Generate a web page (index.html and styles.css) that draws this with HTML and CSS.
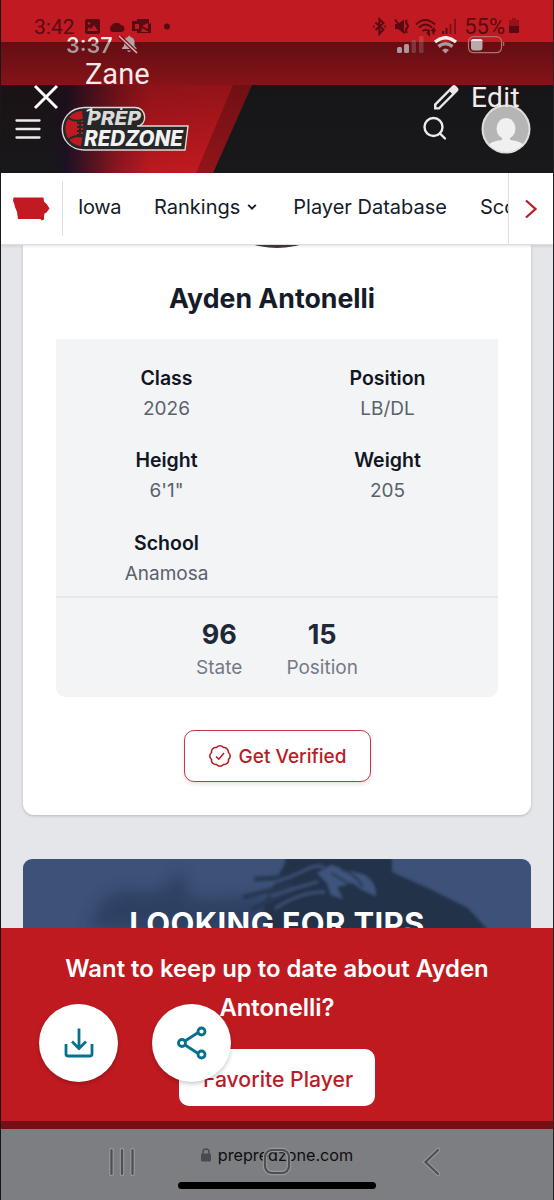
FILE: index.html
```
<!DOCTYPE html>
<html lang="en">
<head>
    <meta charset="UTF-8">
    <meta name="viewport" content="width=device-width, initial-scale=1.0">
    <title>Ayden Antonelli - Prep Redzone</title>
    <link rel="stylesheet" href="styles.css">
</head>
<body>
    <div class="phone">
        <div class="status">
            <div class="status-left">
                <span>3:42</span>
                <svg width="90" height="20" viewBox="0 0 90 20">
                    <path fill-rule="evenodd" d="M3 2h11q2 0 2 2v11q0 2-2 2H3q-2 0-2-2V4q0-2 2-2zM3 14h11l-4-6-3 4-2-2zM5 5a1.400 1.400 0 1 0 .1 0z" />
                    <path d="M28 15a4 4 0 0 1 0-7 5.500 5.500 0 0 1 9 0 3.600 3.600 0 0 1 1 7z" />
                    <path fill-rule="evenodd" d="M48 4h5V2h12v5l2-1v10H53v-2h-5zM51 7v5h4V7zM58 9l6-3v6l-6-3zM58 11l7 4H57z" />
                    <circle cx="83" cy="9.500" r="3" />
                </svg>
            </div>
            <div class="status-right">
                <svg width="90" height="20" viewBox="0 0 90 20">
                    <path class="line" d="M4.500 5.500l8 7-4.200 4.500V2l4.200 4-8 7M2 9.500h1.500M13.500 9.500H15" />
                    <path d="M24 7h3l6-4.500v14L27 12h-3z" />
                    <path class="line" d="M24 2.500l10 14M36 3q-2 2 0 4t0 4 0 5" />
                    <path class="line" d="M45 7.500q9-9 19 0M48 10.500q6.500-6 13 0M51.500 14q3-2.500 6 0M58 12.500v5l-2-2M62.500 17.500v-5.500l-2 2m2-2l2 2" />
                    <path class="line" d="M72 14v3M75.500 11v6" />
                    <path class="line faded" d="M79.500 7v10M84 2v15" />
                </svg>
                <span class="percent">55%</span>
                <svg width="12" height="18" viewBox="0 0 12 18">
                    <path opacity=".45" d="M1 3h3V1h4v2h3v7H1z" />
                    <path d="M1 9h10v6q0 1-1 1H2q-1 0-1-1z" />
                </svg>
            </div>
        </div>
        <div class="shade"></div>

        <header class="header">
            <svg class="header-bg" width="260" height="88" viewBox="0 0 260 88">
                <defs>
                    <linearGradient id="red" x1="0" x2="1">
                        <stop offset="0" stop-color="#18181a" />
                        <stop offset=".22" stop-color="#18181c" />
                        <stop offset=".28" stop-color="#1b1224" />
                        <stop offset=".5" stop-color="#8c1620" />
                        <stop offset=".64" stop-color="#bd1920" />
                        <stop offset="1" stop-color="#c41a20" />
                    </linearGradient>
                    <linearGradient id="fade" x1="0" x2="0" y1="0" y2="1">
                        <stop offset="0" stop-color="#200406" stop-opacity=".3" />
                        <stop offset="1" stop-color="#200406" stop-opacity="0" />
                    </linearGradient>
                </defs>
                <path fill="url(#red)" d="M0 0h233l-37 88H0z" />
                <path fill="#92151a" d="M232 0h19l-39 88h-17z" />
                <path fill="url(#fade)" d="M0 0h251l-39 88H0z" />
            </svg>
            <div class="header-content">
                <svg class="burger" width="26" height="20" viewBox="0 0 26 20">
                    <path d="M1.500 1.500h23M1.500 10h23M1.500 18.500h23" />
                </svg>
                <svg class="logo" width="130" height="46" viewBox="0 0 130 46">
                    <path class="logo-body" d="M23 1.500h51c12 0 13 18 2 18.500h51l-3 24H23C-6 43-6 3 23 1.500z" />
                    <path class="logo-ball" d="M21 5C-1 6-1 38 20 40q4-17 1-35z" />
                    <path class="logo-lines" d="M7 12q8 5 16 1M7 34q7-6 15-3M19 14v17M16 17h6M16 21h6M16 25h6M16 29h6" />
                    <text class="prep" x="26" y="18.500" textLength="54" lengthAdjust="spacingAndGlyphs">PREP</text>
                    <text class="redzone" x="23" y="39.500" textLength="99" lengthAdjust="spacingAndGlyphs">REDZONE</text>
                </svg>
                <svg class="search" width="26" height="26" viewBox="0 0 26 26">
                    <circle cx="11.500" cy="11" r="9" />
                    <path d="M18 17.500l5 5" />
                </svg>
                <svg class="avatar" width="50" height="50" viewBox="0 0 50 50">
                    <defs>
                        <clipPath id="round"><circle cx="25" cy="25" r="23" /></clipPath>
                    </defs>
                    <circle cx="25" cy="25" r="24.500" fill="#dedede" />
                    <circle cx="25" cy="25" r="22.500" fill="#b5b5b5" />
                    <g clip-path="url(#round)" fill="#f0f0f0">
                        <ellipse cx="25" cy="24.500" rx="9.500" ry="10.500" />
                        <path d="M21 30h8v6q11 1 15 6v8H6v-8q4-5 15-6z" />
                    </g>
                </svg>
            </div>
        </header>

        <nav class="nav">
            <div class="nav-state">
                <svg width="37" height="25" viewBox="0 0 37 25">
                    <path d="M.5 1.500h30l.5 4 3 3 2.500 4-3 4-2 1-.5 3 0 3-2.500 1-1-1.500H5l-1-7-2-5L1 7 0 5z" />
                </svg>
            </div>
            <div class="nav-links">
                <a class="link-iowa">Iowa</a>
                <a class="link-rankings">Rankings
                    <svg width="10" height="8" viewBox="0 0 10 8"><path d="M1.200 1.800L5 5.600l3.800-3.800" /></svg>
                </a>
                <a class="link-database">Player Database</a>
                <a class="link-scouting">Scouting</a>
            </div>
            <div class="nav-next">
                <svg width="14" height="22" viewBox="0 0 14 22"><path d="M2 2.500l9.500 8.500L2 19.500" /></svg>
            </div>
        </nav>

        <main class="main">
            <section class="card">
                <div class="photo"></div>
                <h1>Ayden Antonelli</h1>
                <div class="info">
                    <div class="stats">
                        <div class="stat"><b>Class</b><span>2026</span></div>
                        <div class="stat"><b>Position</b><span>LB/DL</span></div>
                        <div class="stat"><b>Height</b><span>6'1"</span></div>
                        <div class="stat"><b>Weight</b><span>205</span></div>
                        <div class="stat"><b>School</b><span>Anamosa</span></div>
                    </div>
                    <div class="ranks">
                        <div class="rank"><b>96</b><span>State</span></div>
                        <div class="rank"><b>15</b><span>Position</span></div>
                    </div>
                </div>
                <button class="verify">
                    <svg width="24" height="24" viewBox="0 0 24 24">
                        <path d="M12 1.800q2 0 3.500 1.700 2-.3 3.500 1.200t1.500 3.800Q22.200 10 22.200 12t-1.700 3.500q.3 2.300-1.200 3.800t-3.800 1.200Q14 22.200 12 22.200t-3.500-1.700q-2.300.3-3.800-1.200t-1.200-3.800Q1.800 14 1.800 12t1.700-3.500Q3.200 6.200 4.700 4.700t3.800-1.200Q10 1.800 12 1.800z" />
                        <path d="M8 12.500l2.800 2.700L16 9" />
                    </svg>
                    Get Verified
                </button>
            </section>
            <section class="banner">
                <svg class="banner-bg" width="508" height="69" viewBox="0 0 508 69">
                    <defs>
                        <filter id="soft" x="-20%" y="-20%" width="140%" height="140%"><feGaussianBlur stdDeviation="7" /></filter>
                        <filter id="slight"><feGaussianBlur stdDeviation="1.500" /></filter>
                    </defs>
                    <path filter="url(#soft)" fill="#2b3e5f" opacity=".8" d="M65 69l15-30 25-10 15 5 25-6 10-18 15 30 60-3 80 20v30z" />
                    <g filter="url(#slight)">
                        <path fill="#243249" d="M262 4l0-5h107v14l38 17 38 19 20 22H245l-5-25z" />
                        <path fill="none" stroke="#273753" stroke-width="5" stroke-linecap="round" d="M233 20l36-2M222 38l46-12M230 50l40-20" />
                        <path fill="none" stroke="#3a4e73" stroke-width="3" stroke-linecap="round" d="M250 24q16-5 30-12t20-4M248 37q24-8 46-14M253 49q24-16 48-16" />
                        <path fill="#3e547c" d="M294 14l14-8 12 4 22 6q12 9 11 21l-14-6-9-7-16 4 6 12-12-4-4-12z" />
                        <path fill="none" stroke="#243249" stroke-width="2" d="M308 14l20 12M318 10q14 4 22 18" />
                    </g>
                </svg>
                <h2>LOOKING FOR TIPS</h2>
            </section>
        </main>

        <section class="follow">
            <p>Want to keep up to date about Ayden Antonelli?</p>
            <button class="favorite">Favorite Player</button>
        </section>
        <div class="follow-edge"></div>

        <footer class="browser">
            <div class="url">
                <svg width="10" height="14" viewBox="0 0 10 14">
                    <rect y="5.500" width="10" height="8" rx="1.200" />
                    <path d="M2 6V4a3 3 0 0 1 6 0v2" />
                </svg>
                prepredzone.com
            </div>
            <div class="home-bar"></div>
        </footer>

        <!-- story viewer controls, on top of the page -->
        <div class="overlay clock">3:37
            <svg width="20" height="20" viewBox="0 0 20 20">
                <path d="M3 15v-1l2-2V8q0-4 4-5 1-3 2.500 0 4 1 4 5v4l2 2v1zM8 16.500h4q-2 3-4 0z" />
                <path class="slash-gap" d="M1 3l17 16" />
                <path class="slash" d="M0 2l18 17" />
            </svg>
        </div>
        <svg class="overlay signal" width="110" height="20" viewBox="0 0 110 20">
            <g fill="#a9999a">
                <rect x="1" y="11" width="5" height="6" rx="1.500" />
                <rect x="8" y="8" width="5" height="9" rx="1.500" />
                <rect x="15.500" y="4" width="4.500" height="13" rx="1.500" opacity=".3" />
                <rect x="23" y="0" width="4.500" height="17" rx="1.500" opacity=".3" />
            </g>
            <g fill="none" stroke-width="3.500">
                <path stroke="#f8eded" d="M39 6q10.500-8.500 21 0" />
                <path stroke="#a9999a" d="M42.500 10.500q7-5.500 14 0" />
            </g>
            <path fill="#a9999a" d="M46 14q3.500-3 7 0l-3.500 3.500z" />
            <rect x="72.500" y=".7" width="33" height="16" rx="5" fill="none" stroke="#b07073" stroke-width="1.200" />
            <rect x="75" y="3" width="11.500" height="11.500" rx="3" fill="#b9abac" />
            <path d="M75 5q0-2 3-2h5.500q3 0 3 2z" fill="#f8eded" />
            <path d="M107.500 6v4" stroke="#a66" stroke-width="1.500" />
        </svg>
        <div class="overlay name">Zane</div>
        <div class="overlay ago">1 min</div>
        <svg class="overlay close" width="26" height="26" viewBox="0 0 26 26"><path d="M2 2l22 22M24 2L2 24" /></svg>
        <svg class="overlay pencil" width="28" height="28" viewBox="0 0 28 28">
            <path fill-rule="evenodd" d="M2 20L20 2q2-2 4 0l1.500 1.500q2 2 0 4L7.500 25.500H2zM4.500 21v2.200h2L20 9.700 17.800 7.500z" />
        </svg>
        <div class="overlay edit">Edit</div>

        <div class="overlay round-btn download">
            <svg width="32" height="32" viewBox="0 0 32 32"><path d="M16 1.500v19M9 14.500l7 7 7-7M3 17v10q0 2 2 2h22q2 0 2-2V17" /></svg>
        </div>
        <div class="overlay round-btn share">
            <svg width="32" height="36" viewBox="0 0 32 36">
                <path d="M9 16l14-9M9 20l14 9" />
                <circle cx="6" cy="18" r="3.500" />
                <circle cx="25.500" cy="6.500" r="3.500" />
                <circle cx="25.500" cy="29.500" r="3.500" />
            </svg>
        </div>

        <svg class="overlay android-nav" width="340" height="30" viewBox="0 0 340 30">
            <g class="halo">
                <path d="M4.500 3v24M15 3v24M25.500 3v24M331 3l-12.500 12L331 27" />
                <rect x="158" y="3" width="24" height="23" rx="7" />
            </g>
            <g class="keys">
                <path d="M4.500 3v24M15 3v24M25.500 3v24M331 3l-12.500 12L331 27" />
                <rect x="158" y="3" width="24" height="23" rx="7" />
            </g>
        </svg>
    </div>
</body>
</html>
```

FILE: styles.css
```
* {
    box-sizing: border-box;
}
body {
    margin: 0;
    font-family: Inter, "Liberation Sans", sans-serif;
    color: #151b28;
}
h1, h2, p {
    margin: 0;
}
svg {
    display: block;
    flex-shrink: 0;
}
.phone {
    position: relative;
    display: flex;
    flex-direction: column;
    width: 554px;
    height: 1200px;
    overflow: hidden;
    border-left: 1px solid #17171c;
    border-right: 1px solid #252529;
}

/* status bar */
.status {
    display: flex;
    justify-content: space-between;
    height: 42px;
    padding: 16px 33px 0 33px;
    background-color: #c11a22;
    color: #580b10;
    font-family: Roboto, sans-serif;
    font-size: 21px;
    line-height: 22px;
}
.status-left, .status-right {
    display: flex;
    gap: 9px;
}
.status-right {
    gap: 3px;
}
.percent {
    font-size: 22px;
}
.status svg {
    margin-top: 1px;
    fill: #580b10;
}
.status .line {
    fill: none;
    stroke: #580b10;
    stroke-width: 1.9;
}
.status .faded {
    opacity: 0.6;
}
.shade {
    height: 43px;
    background: linear-gradient(#620e12, #861319);
}

/* header */
.header {
    position: relative;
    height: 88px;
    background: linear-gradient(#161618, #19191b);
}
.header-bg {
    position: absolute;
    top: 0;
    left: 0;
}
.header-content {
    position: relative;
    display: flex;
    align-items: center;
    height: 88px;
    padding: 0 22px 0 14px;
}
.burger {
    fill: none;
    stroke: #ececec;
    stroke-width: 2.3;
    stroke-linecap: round;
}
.logo {
    margin-left: 20px;
}
.logo-body {
    fill: #252827;
    stroke: #dfd6d6;
    stroke-width: 1.4;
}
.logo-ball {
    fill: #bd1a22;
}
.logo-lines {
    fill: none;
    stroke: #252827;
    stroke-width: 1.8;
}
.logo text {
    fill: #f2f2f2;
    font-weight: 800;
    font-style: italic;
}
.logo .prep {
    font-size: 19px;
    fill: #dcd9d9;
}
.redzone {
    font-size: 21px;
}
.search {
    margin-left: auto;
    fill: none;
    stroke: #ececec;
    stroke-width: 2.4;
    stroke-linecap: round;
}
.avatar {
    margin-left: 33px;
}

/* state nav */
.nav {
    position: relative;
    z-index: 1;
    display: flex;
    align-items: center;
    height: 72px;
    background-color: #fff;
    border-bottom: 1px solid #dcdde1;
    box-shadow: 0 1px 3px rgba(0, 0, 0, 0.12);
}
.nav-state {
    display: flex;
    align-items: center;
    width: 62px;
    height: 55px;
    padding-left: 12px;
    border-right: 1px solid #dfe1e4;
}
.nav-state svg {
    fill: #c11a22;
}
.nav-links {
    display: flex;
    flex: 1;
    align-items: center;
    gap: 33px;
    min-width: 0;
    padding: 0 0 3px 15px;
    overflow: hidden;
    font-size: 20px;
    line-height: 28px;
    white-space: nowrap;
}
.nav-links a {
    display: flex;
    align-items: center;
    gap: 7px;
}
.link-iowa {
    letter-spacing: -0.4px;
}
.link-rankings {
    padding-right: 3px;
}
.nav-links svg {
    fill: none;
    stroke: #151b28;
    stroke-width: 1.9;
}
.nav-next {
    display: flex;
    align-items: center;
    justify-content: center;
    width: 45px;
    height: 72px;
    border-left: 1px solid #e0e1e5;
}
.nav-next svg {
    fill: none;
    stroke: #bb1c27;
    stroke-width: 2.3;
}

/* player card */
.main {
    height: 683px;
    padding: 0 22px;
    overflow: hidden;
    background-color: #e5e6ea;
}
.card {
    position: relative;
    display: flex;
    flex-direction: column;
    align-items: center;
    height: 570px;
    padding: 0 33px;
    background-color: #fff;
    border-radius: 0 0 11px 11px;
    box-shadow: 0 1px 3px rgba(0, 0, 0, 0.2);
}
.photo {
    position: absolute;
    bottom: 567px;
    width: 170px;
    height: 170px;
    border-radius: 50%;
    background-color: #453937;
}
h1 {
    padding: 35px 10px 0 0;
    font-size: 26.7px;
    font-weight: 700;
    line-height: 36px;
}
.info {
    width: 442px;
    height: 358px;
    margin-top: 23px;
    background-color: #f3f4f6;
    border-radius: 0 0 9px 9px;
}
.stats {
    display: grid;
    grid-template-columns: 1fr 1fr;
    grid-auto-rows: 82.3px;
    height: 259px;
    padding-top: 24px;
    border-bottom: 2px solid #e5e7eb;
}
.stat, .rank {
    display: flex;
    flex-direction: column;
    align-items: center;
}
.stat {
    font-size: 19px;
    line-height: 31px;
    color: #5a616d;
}
.stat b {
    font-size: 19.5px;
    font-weight: 600;
    line-height: 30px;
    color: #111624;
}
.ranks {
    display: flex;
    justify-content: center;
    gap: 44px;
    padding-top: 19px;
}
.rank {
    font-size: 19px;
    line-height: 30px;
    color: #747b87;
}
.rank b {
    font-size: 27px;
    font-weight: 700;
    line-height: 36px;
    color: #202838;
}
button {
    font-family: inherit;
    font-weight: 500;
    color: #b91c28;
    background-color: #fff;
}
.verify {
    display: flex;
    align-items: center;
    justify-content: center;
    gap: 7px;
    width: 187px;
    height: 52px;
    margin-top: 33px;
    padding: 0;
    border: 1.5px solid #c13b44;
    border-radius: 10px;
    box-shadow: 0 2px 4px rgba(0, 0, 0, 0.12);
    font-size: 19px;
    white-space: nowrap;
}
.verify svg {
    fill: none;
    stroke: #b91c28;
    stroke-width: 1.6;
}
.banner {
    position: relative;
    height: 150px;
    margin-top: 44px;
    overflow: hidden;
    border-radius: 9px;
    background-color: #3d5278;
}
.banner-bg {
    position: absolute;
    top: 0;
    left: 0;
}
h2 {
    position: relative;
    padding-top: 47px;
    font-size: 31px;
    font-weight: 700;
    line-height: 36px;
    letter-spacing: 0.4px;
    text-align: center;
    color: #fff;
}

/* follow bar */
.follow {
    display: flex;
    flex-direction: column;
    align-items: center;
    height: 193px;
    padding: 22px 60px 0;
    background-color: #c01a21;
}
.follow p {
    font-size: 23.9px;
    font-weight: 600;
    line-height: 38.5px;
    text-align: center;
    color: #fff;
}
.favorite {
    width: 196px;
    height: 57px;
    margin-top: 22px;
    padding: 2px 0 0 2px;
    border: 0;
    border-radius: 10px;
    font-size: 21.2px;
}
.follow-edge {
    height: 8px;
    background-color: #760f13;
}

/* browser footer */
.browser {
    display: flex;
    flex-direction: column;
    align-items: center;
    height: 71px;
    padding-top: 14px;
    background-color: #7c7e82;
}
.url {
    display: flex;
    align-items: center;
    gap: 7px;
    font-size: 16.2px;
    line-height: 24px;
    color: #0d0e10;
}
.url svg {
    fill: #4a4b4f;
}
.url path {
    fill: none;
    stroke: #4a4b4f;
    stroke-width: 1.5;
}
.home-bar {
    width: 198px;
    height: 7px;
    margin-top: 15px;
    border-radius: 4px;
    background-color: #000;
}

/* overlay */
.overlay {
    position: absolute;
    z-index: 2;
    color: #f5eaea;
    white-space: nowrap;
}
.clock {
    top: 34px;
    left: 65px;
    display: flex;
    gap: 6px;
    font-size: 21.5px;
    font-weight: 600;
    line-height: 22px;
    color: transparent;
    background: linear-gradient(#f5eaea 36%, #a8999a 36%);
    background-clip: text;
    -webkit-background-clip: text;
}
.clock svg {
    fill: #b6a5a6;
}
.clock .slash-gap {
    stroke: #7d1016;
    stroke-width: 4;
}
.clock .slash {
    stroke: #c9bcbd;
    stroke-width: 1.6;
}
.signal {
    top: 36px;
    left: 395px;
}
.name {
    top: 57px;
    left: 84px;
    font-family: Roboto, sans-serif;
    font-size: 29px;
    line-height: 34px;
}
.ago {
    top: 104px;
    left: 84px;
    font-family: Roboto, sans-serif;
    font-size: 20px;
    line-height: 24px;
    clip-path: inset(0 0 16px 0);
}
.close {
    top: 84px;
    left: 32px;
    fill: none;
    stroke: #fff;
    stroke-width: 3;
}
.pencil {
    top: 84px;
    left: 431px;
    fill: #e9e9e9;
}
.edit {
    top: 83px;
    left: 470px;
    font-family: Roboto, sans-serif;
    font-size: 28px;
    line-height: 30px;
    letter-spacing: 0.4px;
    clip-path: inset(0 0 5px 0);
}
.round-btn {
    top: 1004px;
    display: flex;
    align-items: center;
    justify-content: center;
    width: 79px;
    height: 78px;
    border-radius: 50%;
    background-color: #fff;
    box-shadow: 0 2px 4px rgba(0, 0, 0, 0.22);
}
.round-btn svg {
    fill: none;
    stroke: #08708f;
    stroke-width: 2.8;
}
.download {
    left: 38px;
}
.share {
    left: 151px;
}
.android-nav {
    top: 1147px;
    left: 106px;
    fill: none;
}
.halo {
    stroke: #97999b;
    stroke-width: 4.5;
    stroke-linecap: round;
}
.keys {
    stroke: #4e4f52;
    stroke-width: 2.2;
    stroke-linecap: round;
}
```
